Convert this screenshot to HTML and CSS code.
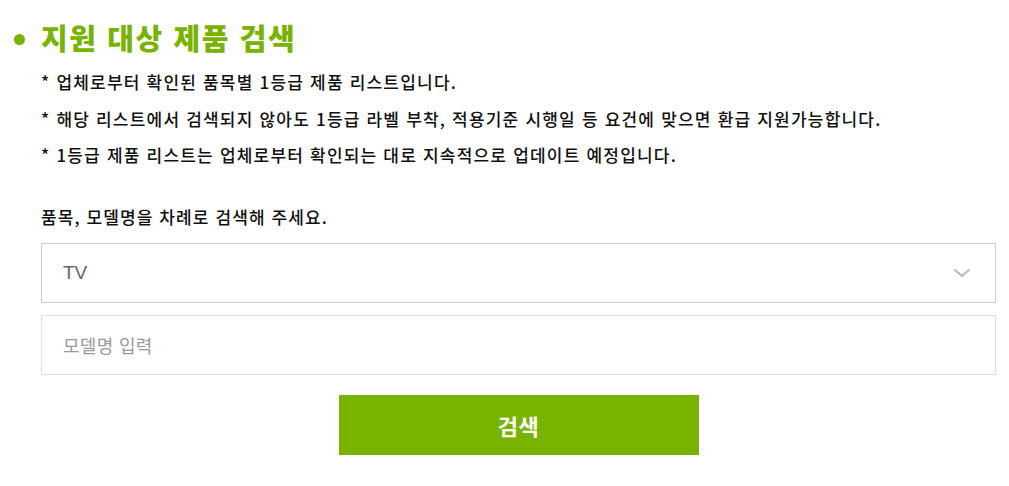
FILE: index.html
```html
<!DOCTYPE html>
<html lang="ko">
<head>
<meta charset="utf-8">
<link rel="stylesheet" href="styles.css">
</head>
<body>
<section class="search">
  <h2 class="title"><span class="dot"></span>지원 대상 제품 검색</h2>
  <div class="body">
    <ul class="notes">
      <li>* 업체로부터 확인된 품목별 1등급 제품 리스트입니다.</li>
      <li>* 해당 리스트에서 검색되지 않아도 1등급 라벨 부착, 적용기준 시행일 등 요건에 맞으면 환급 지원가능합니다.</li>
      <li>* 1등급 제품 리스트는 업체로부터 확인되는 대로 지속적으로 업데이트 예정입니다.</li>
    </ul>
    <p class="label">품목, 모델명을 차례로 검색해 주세요.</p>
    <div class="field select">
      <span class="value">TV</span>
      <svg class="chev" width="18" height="10" viewBox="0 0 18 10"><path d="M1.5 1.5 L9 8 L16.5 1.5" fill="none" stroke="#bbbbbb" stroke-width="2.2"/></svg>
    </div>
    <div class="field input"><span class="placeholder">모델명 입력</span></div>
    <div class="actions"><button class="btn">검색</button></div>
  </div>
</section>
</body>
</html>
```
FILE: styles.css
```css
html, body { margin: 0; padding: 0; background: #fff; }
body { font-family: "Noto Sans CJK KR", "Noto Sans", sans-serif; color: #111; }
.search { padding: 17px 0 0 14px; width: 982px; }
.title {
  display: flex; align-items: center; gap: 16px;
  margin: 0; font-size: 29px; font-weight: 900; color: #78b300;
  height: 40px; line-height: 40px; letter-spacing: 1.6px;
}
.dot { width: 11px; height: 11px; border-radius: 50%; background: #78b300; flex: none; margin-top: 4px; }
.body { padding-left: 27px; }
.notes { list-style: none; margin: 7px 0 0; padding: 0; }
.notes li {
  display: block; height: 36.5px; line-height: 36.5px;
  font-size: 17px; font-weight: 500; letter-spacing: 1.2px; white-space: nowrap;
}
.label {
  margin: 31px 0 0; height: 24px; line-height: 24px;
  font-size: 17px; font-weight: 500; letter-spacing: 1.1px;
}
.field {
  box-sizing: border-box; height: 60px; width: 955px;
  display: flex; align-items: center; justify-content: space-between;
  padding: 0 24px 0 21px;
}
.select { margin-top: 14px; border: 1px solid #cccccc; }
.input { margin-top: 12px; border: 1px solid #dddddd; }
.value { font-family: "Liberation Sans", Arial, sans-serif; font-size: 19px; color: #666; }
.placeholder { font-size: 18px; color: #999; letter-spacing: 0.3px; }
.actions { display: flex; justify-content: center; margin-top: 20px; width: 955px; }
.btn {
  width: 360px; height: 60px; border: 0; background: #78b300; color: #fff;
  font-family: inherit; font-size: 22px; font-weight: 700; padding: 0; letter-spacing: 0.5px;
}
```
